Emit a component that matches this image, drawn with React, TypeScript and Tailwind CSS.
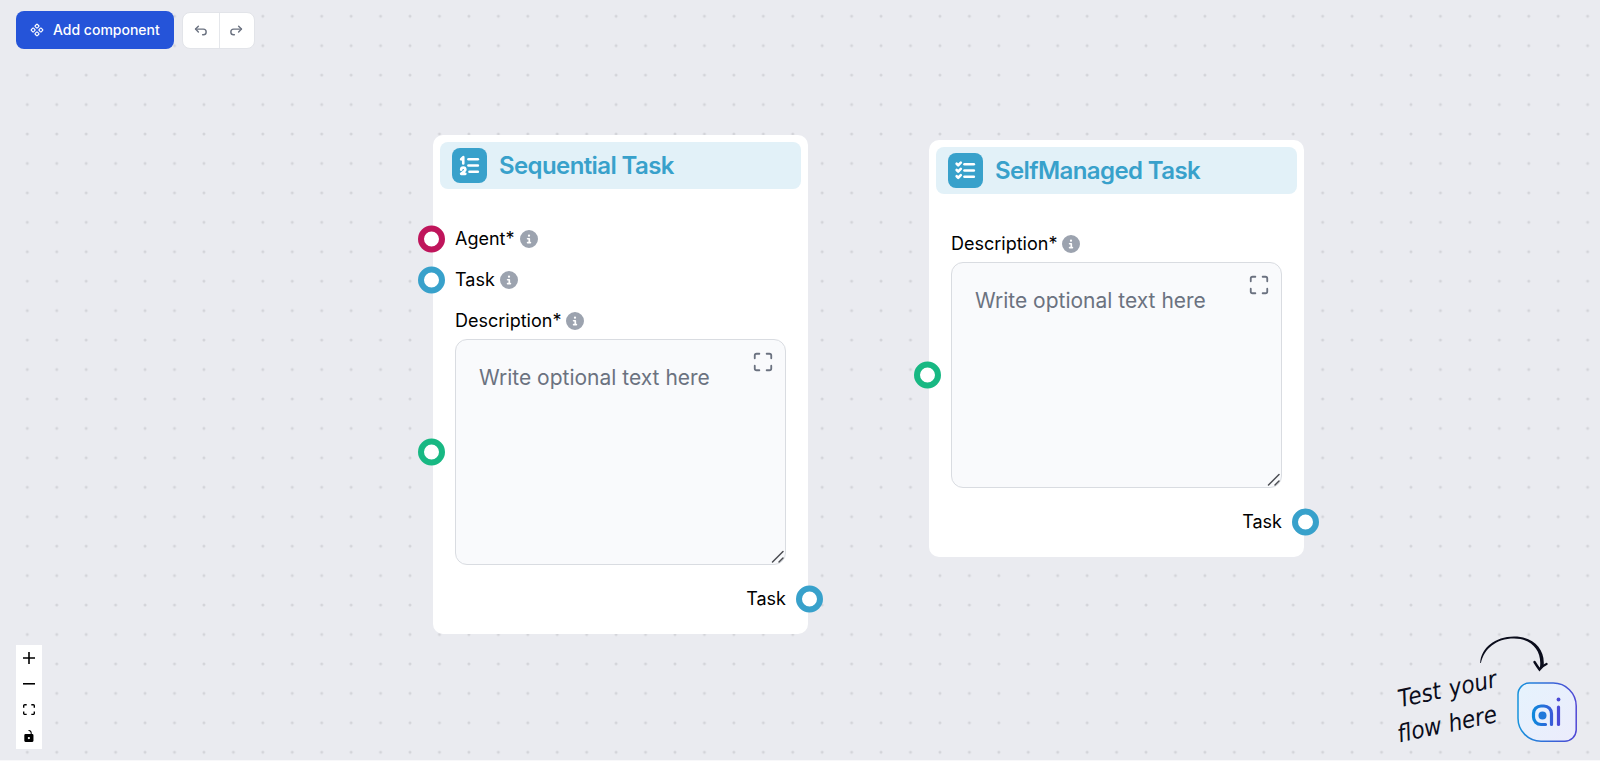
import React, { useState } from 'react';
import { Component, Maximize } from 'lucide-react';
import { FaCircleInfo } from 'react-icons/fa6';
import { TbArrowBackUp, TbArrowForwardUp, TbListCheck, TbListNumbers } from 'react-icons/tb';

interface FlowNodeProps {
  id: string;
  title: string;
  icon: React.ReactNode;
  inputs?: { label: string; ring: string }[];
}

// Connection point, centred on the edge of its row
const Handle: React.FC<{ side: 'left' | 'right'; ring: string }> = ({ side, ring }) => (
  <span
    className={`absolute top-1/2 size-[27px] -translate-y-1/2 rounded-full border-[6px] bg-white ${ring} ${
      side === 'left' ? '-left-[37px]' : '-right-[37px]'
    }`}
  />
);

const InfoIcon: React.FC = () => <FaCircleInfo className="size-[18px] text-[#9ca3af]" />;

const FlowNode: React.FC<FlowNodeProps> = ({ id, title, icon, inputs = [] }) => {
  const [text, setText] = useState('');

  return (
    <article className="w-[375px] rounded-[10px] bg-white p-[7px]">
      <header className="flex h-[47px] items-center gap-3 rounded-lg bg-[#e2f1f8] px-3">
        <span className="flex size-[35px] items-center justify-center rounded-lg bg-[#38a1cb] text-white">
          {icon}
        </span>
        <h2 className="text-2xl font-semibold tracking-tight text-[#38a1cb]">{title}</h2>
      </header>

      <div className="px-[15px] pt-9 pb-[14px]">
        {inputs.map((input) => (
          <div key={input.label} className="relative mb-[13px] flex h-7 items-center gap-[5px]">
            <Handle side="left" ring={input.ring} />
            <span>{input.label}</span>
            <InfoIcon />
          </div>
        ))}

        <div className="flex h-7 items-center gap-[5px]">
          <label htmlFor={`${id}-description`}>Description*</label>
          <InfoIcon />
        </div>

        <div className="relative mt-1">
          <Handle side="left" ring="border-[#18b883]" />
          <textarea
            id={`${id}-description`}
            value={text}
            onChange={(e) => setText(e.target.value)}
            placeholder="Write optional text here"
            className="block h-[226px] w-full resize rounded-xl border border-[#d9dce1] bg-[#f9fafc] px-[23px] py-6 text-[21px] leading-7 outline-none placeholder:text-[#6b7280] [&::-webkit-resizer]:hidden"
          />
          <svg
            viewBox="0 0 16 16"
            className="pointer-events-none absolute right-0 bottom-0 size-4"
            stroke="#4b4d52"
            strokeWidth="1.5"
            strokeLinecap="round"
            aria-hidden="true"
          >
            <path d="M2.500 13L13 2.500M9 13L13 9" />
          </svg>
          <button type="button" aria-label="Expand" className="absolute top-3 right-3 text-[#6b7280]">
            <Maximize size={22} strokeWidth={2} />
          </button>
        </div>

        <div className="relative mt-5 flex h-7 items-center justify-end">
          <span>Task</span>
          <Handle side="right" ring="border-[#38a1cb]" />
        </div>
      </div>
    </article>
  );
};

const DotGrid: React.FC = () => (
  <svg className="absolute inset-0 size-full" aria-hidden="true">
    <pattern id="dots" x="12.6" y="1.5" width="29.44" height="29.44" patternUnits="userSpaceOnUse">
      <circle cx="14.72" cy="14.72" r="1.5" fill="#d3d4d9" />
    </pattern>
    <rect width="100%" height="100%" fill="url(#dots)" />
  </svg>
);

const controls = [
  {
    label: 'zoom in',
    viewBox: '0 0 32 32',
    path: 'M32 18.133H18.133V32h-4.266V18.133H0v-4.266h13.867V0h4.266v13.867H32z',
  },
  { label: 'zoom out', viewBox: '0 0 32 5', path: 'M0 0h32v4.2H0z' },
  {
    label: 'fit view',
    viewBox: '0 0 32 30',
    path: 'M3.692 4.63c0-.53.4-.938.939-.938h5.215V0H4.708C2.13 0 0 2.054 0 4.63v5.216h3.692V4.631zM27.354 0h-5.2v3.692h5.17c.53 0 .984.4.984.939v5.215H32V4.631A4.624 4.624 0 0027.354 0zm.954 24.83c0 .532-.4.94-.939.94h-5.215v3.768h5.215c2.577 0 4.631-2.13 4.631-4.707v-5.139h-3.692v5.139zm-23.677.94c-.531 0-.939-.4-.939-.94v-5.138H0v5.139c0 2.577 2.13 4.707 4.708 4.707h5.138V25.77H4.631z',
  },
  {
    label: 'toggle interactivity',
    viewBox: '0 0 25 32',
    path: 'M21.333 10.667H19.81V7.619C19.81 3.429 16.38 0 12.19 0c-4.114 1.828-1.37 2.133.305 2.438 1.676.305 4.42 2.59 4.42 5.181v3.048H3.047A3.056 3.056 0 000 13.714v15.238A3.056 3.056 0 003.048 32h18.285a3.056 3.056 0 003.048-3.048V13.714a3.056 3.056 0 00-3.048-3.047zM12.19 24.533a3.056 3.056 0 01-3.047-3.047 3.056 3.056 0 013.047-3.048 3.056 3.056 0 013.048 3.048 3.056 3.056 0 01-3.048 3.047z',
  },
];

const ChatLogo: React.FC = () => (
  <svg viewBox="0 0 60 60" className="block size-[60px]" fill="none" aria-hidden="true">
    <defs>
      <linearGradient id="logo" x1="0" y1="0" x2="60" y2="0" gradientUnits="userSpaceOnUse">
        <stop offset="0" stopColor="#1593dc" />
        <stop offset="1" stopColor="#5046d4" />
      </linearGradient>
      <linearGradient id="logo-fill" x1="0" y1="0" x2="60" y2="60" gradientUnits="userSpaceOnUse">
        <stop offset="0" stopColor="#e5f3fd" />
        <stop offset="1" stopColor="#ececfc" />
      </linearGradient>
      <linearGradient id="logo-mark" x1="15" y1="0" x2="44" y2="0" gradientUnits="userSpaceOnUse">
        <stop offset="0" stopColor="#0d8bdc" />
        <stop offset="1" stopColor="#4a47d6" />
      </linearGradient>
    </defs>
    <path
      d="M12.500 1H36A23 23 0 0 1 59.200 24V48A11.500 11.500 0 0 1 47.700 59.200H24A23 23 0 0 1 1 36V12.500A11.500 11.500 0 0 1 12.500 1Z"
      fill="url(#logo-fill)"
      stroke="url(#logo)"
      strokeWidth="1.500"
    />
    <g stroke="url(#logo-mark)" strokeWidth="3.200" strokeLinecap="round">
      <path d="M34.500 42.500V31.500A7.500 7.500 0 0 0 27 24H24A7.500 7.500 0 0 0 16.500 31.500V35A7.500 7.500 0 0 0 24 42.500H28.500" />
      <path d="M41.500 25V42.510" stroke="#4a4bd6" />
    </g>
    <circle cx="25.500" cy="33.500" r="4" fill="#1f78da" />
    <circle cx="41.500" cy="17.500" r="1.900" fill="#4a4bd6" />
  </svg>
);

const App: React.FC = () => {
  return (
    <div className="relative h-screen overflow-hidden border-b border-[#f8f8fa] bg-[#eaebf0] font-['Inter',sans-serif] text-lg text-black">
      <DotGrid />

      {/* Nodes */}
      <div className="absolute top-[135px] left-[433px]">
        <FlowNode
          id="sequential"
          title="Sequential Task"
          icon={<TbListNumbers size={25} strokeWidth={2.5} />}
          inputs={[
            { label: 'Agent*', ring: 'border-[#bf155b]' },
            { label: 'Task', ring: 'border-[#38a1cb]' },
          ]}
        />
      </div>
      <div className="absolute top-[140px] left-[929px]">
        <FlowNode
          id="self-managed"
          title="SelfManaged Task"
          icon={<TbListCheck size={25} strokeWidth={2.5} />}
        />
      </div>

      {/* Toolbar */}
      <div className="absolute top-[11px] left-4 flex items-center gap-2">
        <button
          type="button"
          className="flex h-[38px] items-center gap-[9px] rounded-lg bg-[#2554d9] px-[14px] text-sm font-medium text-white"
        >
          <Component size={14} />
          Add component
        </button>
        <div className="flex h-[37px] divide-x divide-[#e5e7eb] rounded-lg border border-[#e2e4e9] bg-white text-[#6b7280]">
          <button type="button" aria-label="Undo" className="flex w-[37px] items-center justify-center">
            <TbArrowBackUp size={17} />
          </button>
          <button type="button" aria-label="Redo" className="flex w-[34px] items-center justify-center">
            <TbArrowForwardUp size={17} />
          </button>
        </div>
      </div>

      {/* Zoom controls */}
      <div className="absolute bottom-[11px] left-4 flex flex-col bg-white">
        {controls.map((control) => (
          <button
            key={control.label}
            type="button"
            aria-label={control.label}
            className="flex size-[26px] items-center justify-center"
          >
            <svg viewBox={control.viewBox} className="max-h-3 w-3" fill="currentColor">
              <path d={control.path} />
            </svg>
          </button>
        ))}
      </div>

      {/* Chat hint */}
      <div className="absolute right-[23px] bottom-[18px] flex items-end gap-5">
        <p className="grid grid-cols-2 gap-x-1 text-center font-['DejaVu_Sans_Condensed','DejaVu_Sans',cursive] text-2xl leading-6 text-[#0b0d1c] italic">
          <span className="mt-[11px] -rotate-12">Test</span>
          <span className="mb-[11px] -rotate-12">your</span>
          <span className="mt-[11px] -rotate-12">flow</span>
          <span className="mb-[11px] -rotate-12">here</span>
        </p>
        <button type="button" aria-label="Open chat">
          <ChatLogo />
        </button>
      </div>
      <svg
        viewBox="0 0 70 38"
        className="absolute right-[50px] bottom-[87px] h-[38px] w-[70px]"
        fill="#0b0d1c"
        aria-hidden="true"
      >
        <path d="M.200 28C1 13 15 1.500 34 1.500C53 1.500 66 14 63.500 32L60 32C62 16 52 3.500 34 3.500C16 3.500 4 14 .900 28Z" />
        <path
          d="M54.500 27Q57 31 59.500 34.500Q62 31 66.500 29"
          fill="none"
          stroke="#0b0d1c"
          strokeWidth="2.4"
          strokeLinecap="round"
        />
      </svg>
    </div>
  );
};

export default App;
